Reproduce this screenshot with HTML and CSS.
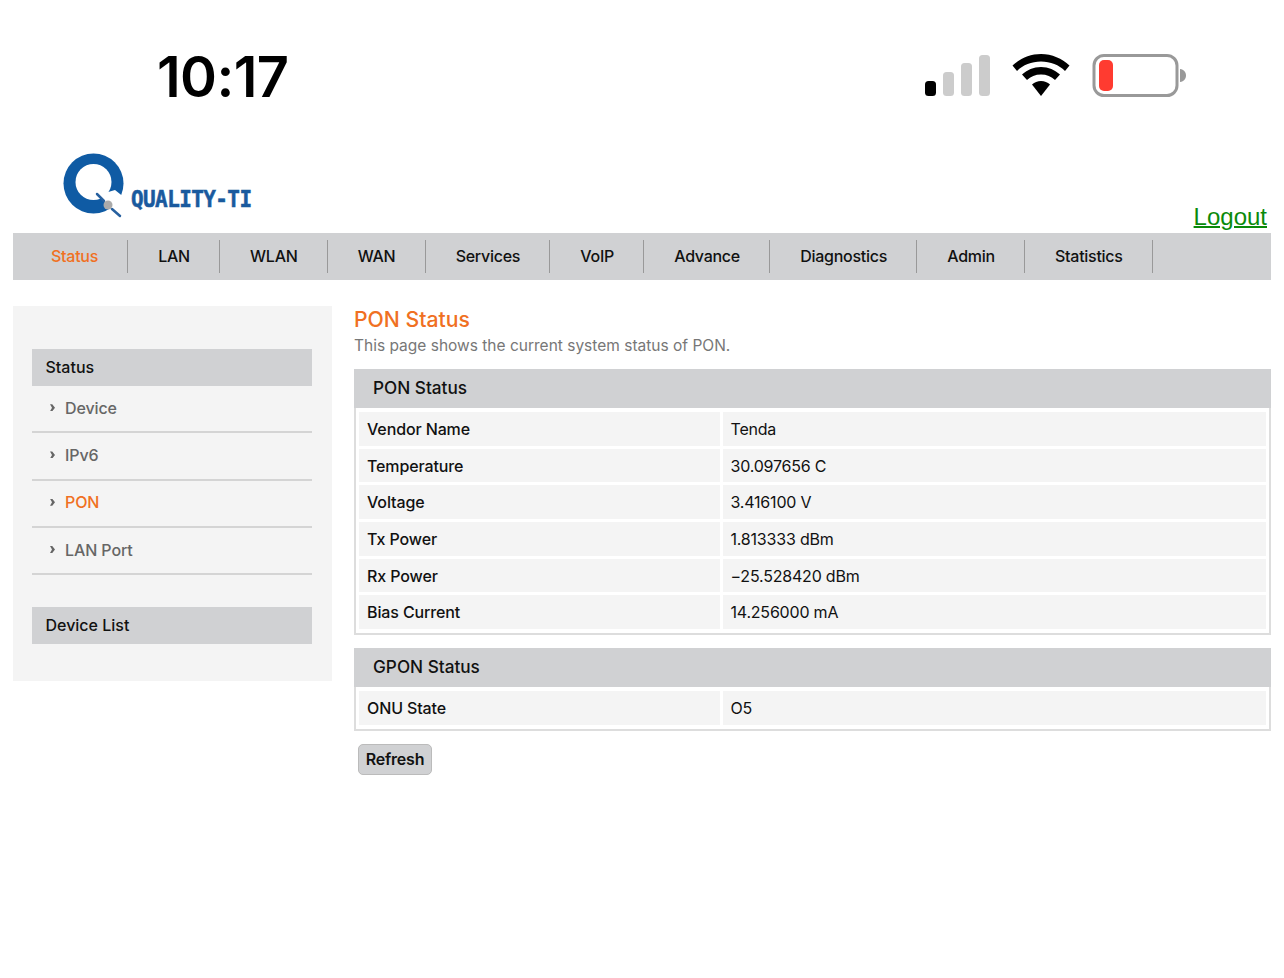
FILE: index.html
```html
<!DOCTYPE html>
<html lang="en">
<head>
<meta charset="utf-8">
<title>PON Status</title>
<link rel="stylesheet" href="styles.css">
</head>
<body>
<div class="statusbar">
  <div class="time">10:17</div>
  <div class="indicators">
    <svg class="signal" width="66" height="44" viewBox="0 0 66 44" aria-hidden="true">
      <rect x="0" y="28" width="11" height="15" rx="3.5" fill="#000"/>
      <rect x="18" y="19" width="11" height="24" rx="3.5" fill="#ccc"/>
      <rect x="36" y="10" width="11" height="33" rx="3.5" fill="#ccc"/>
      <rect x="54" y="2" width="11" height="41" rx="3.5" fill="#ccc"/>
    </svg>
    <svg class="wifi" width="58" height="44" viewBox="0 0 58 44" aria-hidden="true">
      <path d="M29 1C18 1 8 5.500 0.500 12.500L5 18C11 12 19.500 8.500 29 8.500S47 12 53 18L57.500 12.500C50 5.500 40 1 29 1Z" fill="#000"/>
      <path d="M29 14C21.500 14 15 17 10 21.500L15 27C18.500 23.500 23.500 21.500 29 21.500S39.500 23.500 43 27L48 21.500C43 17 36.500 14 29 14Z" fill="#000"/>
      <path d="M29 28C25.500 28 22.500 29.200 20 31.500L29 43L38 31.500C35.500 29.200 32.500 28 29 28Z" fill="#000"/>
    </svg>
    <svg class="battery" width="96" height="46" viewBox="0 0 96 46" aria-hidden="true">
      <rect x="2" y="2.500" width="83" height="40" rx="10" fill="#fff" stroke="#999" stroke-width="3"/>
      <rect x="7" y="7" width="14" height="31" rx="5" fill="#ff3b30"/>
      <path d="M88 16C92 16.500 94 19.500 94 22.500S92 28.500 88 29Z" fill="#999"/>
    </svg>
  </div>
</div>

<header class="brand">
  <svg class="logo" width="70" height="70" viewBox="0 0 70 70" aria-hidden="true">
    <circle cx="33.500" cy="31.500" r="30" fill="#0f5ba4"/>
    <circle cx="33.500" cy="30" r="18" fill="#fff"/>
    <path d="M38 43L58 64L70 50L55 38Z" fill="#fff"/>
    <path d="M37 42L44 49M52 57L60 64" stroke="#27609f" stroke-width="2.500" stroke-linecap="round"/>
    <circle cx="48" cy="53" r="4.500" fill="#aaa"/>
  </svg>
  <span class="logo-name">QUALITY-TI</span>
  <a class="logout" href="#">Logout</a>
</header>

<nav class="topnav">
  <a class="tab active" href="#">Status</a>
  <a class="tab" href="#">LAN</a>
  <a class="tab" href="#">WLAN</a>
  <a class="tab" href="#">WAN</a>
  <a class="tab" href="#">Services</a>
  <a class="tab" href="#">VoIP</a>
  <a class="tab" href="#">Advance</a>
  <a class="tab" href="#">Diagnostics</a>
  <a class="tab" href="#">Admin</a>
  <a class="tab" href="#">Statistics</a>
</nav>

<div class="layout">
  <aside class="sidebar">
    <h2 class="side-head">Status</h2>
    <ul class="side-list">
      <li class="side-item"><span class="arrow"></span><a href="#">Device</a></li>
      <li class="side-item"><span class="arrow"></span><a href="#">IPv6</a></li>
      <li class="side-item current"><span class="arrow"></span><a href="#">PON</a></li>
      <li class="side-item"><span class="arrow"></span><a href="#">LAN Port</a></li>
    </ul>
    <h2 class="side-head">Device List</h2>
  </aside>

  <main class="content">
    <h1 class="page-title">PON Status</h1>
    <p class="page-desc">This page shows the current system status of PON.</p>

    <section class="panel">
      <h2 class="panel-head">PON Status</h2>
      <div class="grid">
        <div class="key">Vendor Name</div><div class="val">Tenda</div>
        <div class="key">Temperature</div><div class="val">30.097656 C</div>
        <div class="key">Voltage</div><div class="val">3.416100 V</div>
        <div class="key">Tx Power</div><div class="val">1.813333 dBm</div>
        <div class="key">Rx Power</div><div class="val">−25.528420 dBm</div>
        <div class="key">Bias Current</div><div class="val">14.256000 mA</div>
      </div>
    </section>

    <section class="panel">
      <h2 class="panel-head">GPON Status</h2>
      <div class="grid">
        <div class="key">ONU State</div><div class="val">O5</div>
      </div>
    </section>

    <button class="refresh" type="button">Refresh</button>
  </main>
</div>
</body>
</html>
```
FILE: styles.css
```css
* { box-sizing: border-box; }
html, body { margin: 0; padding: 0; }
body {
  background: #fff;
  color: #000;
  font-family: "Inter", "Liberation Sans", sans-serif;
  font-size: 16px;
  min-height: 978px;
  padding: 0 13px;
}
a { color: inherit; text-decoration: none; }
h1, h2, p, ul { margin: 0; padding: 0; }
li { list-style: none; }

.statusbar {
  height: 137px;
  display: flex;
  justify-content: space-between;
  margin: 0 -13px;
  padding: 0 96px 0 157px;
}
.time {
  font-size: 56px;
  font-weight: 600;
  line-height: 56px;
  margin-top: 49px;
  letter-spacing: -0.600px;
}
.indicators {
  display: flex;
  align-items: flex-start;
  padding-top: 53px;
}
.signal { margin-right: 21px; }
.wifi { margin-right: 22px; }

.brand {
  height: 96px;
  position: relative;
  display: flex;
  align-items: flex-start;
  padding: 15px 0 0 47px;
}
.logo { flex: none; }
.logo-name {
  position: absolute;
  left: 118px;
  top: 49px;
  color: #1a5a9e;
  font-family: "DejaVu Sans Mono", monospace;
  font-size: 21px;
  line-height: 26px;
  font-weight: 700;
  letter-spacing: -0.600px;
  transform: scaleY(1.100);
  -webkit-text-stroke: 0.500px #1a5a9e;
}
.logout {
  margin-left: auto;
  align-self: flex-end;
  margin-right: 4px;
  margin-bottom: 2px;
  color: #0a8a0a;
  font-family: "Liberation Sans", sans-serif;
  font-size: 24px;
  line-height: 29px;
  text-decoration: underline;
  text-decoration-thickness: 2px;
}

.topnav {
  height: 47px;
  background: #d0d1d3;
  display: flex;
  align-items: center;
  padding: 0 0 0 8px;
}
.tab {
  height: 33px;
  display: flex;
  align-items: center;
  padding: 0 29.200px 1px 30px;
  border-right: 1px solid #999;
  font-weight: 500;
  font-size: 16px;
  letter-spacing: -0.270px;
  color: #111;
}
.tab.active { color: #f07022; }

.layout {
  display: flex;
  align-items: flex-start;
  gap: 22px;
  margin-top: 26px;
}
.sidebar {
  flex: none;
  width: 319px;
  height: 375px;
  background: #f4f4f4;
  padding: 43px 20px 0 19px;
}
.side-head {
  height: 37px;
  background: #d0d1d3;
  padding-left: 13.500px;
  font-size: 16px;
  line-height: 37px;
  font-weight: 500;
  color: #111;
}
.side-list { margin-bottom: 32px; }
.side-item {
  height: 47.300px;
  display: flex;
  align-items: center;
  padding: 0 0 2px 18px;
  border-bottom: 2px solid #d4d4d4;
  color: #666;
  font-weight: 500;
  letter-spacing: -0.100px;
}
.side-item.current { color: #f07022; }
.arrow {
  width: 5px;
  height: 7px;
  margin-right: 10px;
  background: #666;
  clip-path: polygon(0 0, 45% 0, 100% 50%, 45% 100%, 0 100%, 40% 50%);
}

.content { flex: 1; min-width: 0; }
.page-title {
  color: #f07022;
  font-size: 21.200px;
  line-height: 27px;
  font-weight: 500;
}
.page-desc {
  color: #777;
  font-size: 15.500px;
  line-height: 24px;
  margin-top: 1px;
  margin-bottom: 11px;
}
.panel {
  border: 2px solid #ddd;
  border-top: 0;
  margin-bottom: 13px;
}
.panel-head {
  height: 39px;
  margin: 0 -2px;
  background: #d0d1d3;
  padding-left: 19px;
  font-size: 17.200px;
  line-height: 38px;
  font-weight: 500;
  color: #111;
}
.grid {
  display: grid;
  grid-template-columns: 361px 1fr;
  grid-auto-rows: 33.700px;
  gap: 3px;
  padding: 4px 3px 4px;
}
.key, .val {
  background: #f4f4f4;
  display: flex;
  align-items: center;
  padding-left: 8px;
  color: #111;
  letter-spacing: -0.200px;
}
.val { padding-left: 7.500px; }
.key { font-weight: 500; letter-spacing: -0.120px; }
.refresh {
  display: block;
  width: 74px;
  height: 31px;
  margin-left: 4px;
  padding: 0;
  background: #d0d1d3;
  border: 1px solid #bbb;
  border-radius: 5px;
  font-family: inherit;
  font-size: 16px;
  font-weight: 600;
  letter-spacing: -0.200px;
  color: #111;
}
```
